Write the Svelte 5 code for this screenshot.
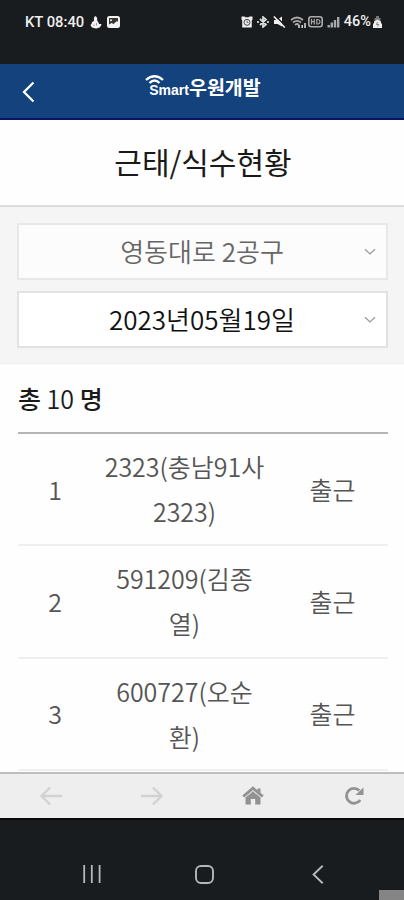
<script lang="ts">
	type Worker = { no: number; name: string; status: string };

	let workers: Worker[] = $state([
		{ no: 1, name: '2323(충남91사2323)', status: '출근' },
		{ no: 2, name: '591209(김종열)', status: '출근' },
		{ no: 3, name: '600727(오순환)', status: '출근' }
	]);

	let total = $state(10);
	let selects = [
		{ label: '영동대로 2공구', disabled: true },
		{ label: '2023년05월19일', disabled: false }
	];
</script>

<div class="screen">
	<div class="status-bar">
		<div class="status-left">
			<span>KT 08:40</span>
			<svg class="flame" width="12" height="13" viewBox="0 0 12 13">
				<path d="M5 0Q8 1 7 4L8 6Q9 7 9 8L11.5 8Q11 12 6 12.5Q1 12 0.5 9Q2 8 2 6L4 5Q3 2 5 0Z" fill="#f2f2f2" />
				<path d="M4 8.500V10M6.500 7V9.500" stroke="#777" stroke-width="0.800" />
			</svg>
			<svg width="13" height="12" viewBox="0 0 13 12">
				<rect x="1" y="1" width="11" height="10" rx="1.500" fill="#353535" stroke="#f2f2f2" stroke-width="2" />
				<path d="M2 10V8.500L4.500 7L6.500 8L10 5L11.500 6.500V10Z" fill="#f2f2f2" />
				<circle cx="4" cy="4.200" r="1" fill="#f2f2f2" />
			</svg>
		</div>
		<div class="status-right">
			<svg width="12" height="12" viewBox="0 0 12 12">
				<path d="M0.500 0.500H3.500L4.500 1.200H7.500L8.500 0.500H11.500V3.500L10.800 4.500V11.500H1.200V4.500L0.500 3.500Z" fill="#eee" />
				<circle cx="6" cy="6.300" r="3" fill="none" stroke="#454a4d" />
				<path d="M6 4.500V6.500H7.500" fill="none" stroke="#454a4d" stroke-width="0.800" />
			</svg>
			<svg width="12" height="12" viewBox="0 0 12 12" fill="none" stroke="#ddd" stroke-width="1.700">
				<path d="M3 3L9 8.500L6 11V1L9 3.500L3 9M1 5V7M11 5V7" />
			</svg>
			<svg width="13" height="12" viewBox="0 0 13 12">
				<path d="M1 4H4L9 0.500V10.500L4.500 8H1Z" fill="#eee" />
				<path d="M2.500 0L12.500 10" stroke="#181c1f" stroke-width="1.500" />
				<path d="M0.800 0.500L11.800 11.500" stroke="#eee" stroke-width="1.600" />
			</svg>
			<svg class="wifi" width="17" height="13" viewBox="0 0 17 13" fill="none" stroke="#aaa" stroke-width="1.700">
				<path d="M1 4Q7 -1 13 4M3 6.500Q7 3.200 11 6.500M5 9Q7 7 9 9" />
				<path d="M9 9V12M12.200 9V12M15 7V12" stroke="#ddd" stroke-width="1.500" />
			</svg>
			<svg width="15" height="12" viewBox="0 0 15 12" fill="none" stroke="#aaa">
				<rect x="0.800" y="0.800" width="13.400" height="10" rx="2.500" stroke-width="1.600" />
				<path d="M3.500 3V8.500M3.500 5.700H6.300M6.300 3V8.500M8.800 3.500V8H10Q12 7.800 12 5.800T10 3.500Z" stroke-width="1.200" />
			</svg>
			<svg width="13" height="12" viewBox="0 0 13 12" fill="#a8a8a8">
				<path d="M0.500 9H2.900V11.500H0.500ZM3.600 6.500H6V11.500H3.600ZM6.800 4H9.200V11.500H6.800ZM10 1H12.400V11.500H10Z" />
			</svg>
			<span class="battery-text">46%</span>
			<svg width="9" height="13" viewBox="0 0 9 13">
				<path d="M3 0H6V2H7.500V5H1.500V2H3Z" fill="#777" />
				<path d="M1 5.500L4.500 3.500L8 5.500V7L9 8V12H0V8L1 7Z" fill="#eee" />
				<path d="M4.500 6L3.500 8.500H5.800L4.500 10.500" fill="none" stroke="#666" stroke-width="0.800" />
			</svg>
		</div>
	</div>

	<header class="app-header">
		<button class="back" aria-label="뒤로">
			<svg width="13" height="22" viewBox="0 0 13 22" fill="none" stroke="#fff" stroke-width="2.300">
				<path d="M11.500 1.500L2 11L11.500 20.500" />
			</svg>
		</button>
		<div class="logo">
			<svg class="logo-wave" width="19" height="11" viewBox="0 0 19 11" fill="none" stroke="#fff" stroke-width="2.300">
				<path d="M1 5Q9.500 -2.500 18 5M4.500 8Q9.500 3 14.500 8" />
			</svg>
			<span class="logo-en">Smart</span>
			<span class="logo-ko">우원개발</span>
		</div>
	</header>

	<h1>근태/식수현황</h1>

	<section class="filters">
		{#each selects as select}
			<button class="select" class:disabled={select.disabled}>
				<span>{select.label}</span>
				<svg width="12" height="8" viewBox="0 0 12 8" fill="none" stroke="#999" stroke-width="1.200">
					<path d="M1 1.200L6 6L11 1.200" />
				</svg>
			</button>
		{/each}
	</section>

	<main>
		<p class="total"><b>총</b> {total} <b>명</b></p>
		<ul>
			{#each workers as worker}
				<li>
					<span class="no">{worker.no}</span>
					<span class="name">{worker.name}</span>
					<span class="status">{worker.status}</span>
				</li>
			{/each}
		</ul>
	</main>

	<nav class="toolbar">
		<svg width="24" height="20" viewBox="0 0 24 20" fill="none" stroke="#d2d2d2" stroke-width="2.400">
			<path d="M23 10H2.500M11 1.500L2.500 10L11 18.500" />
		</svg>
		<svg width="24" height="20" viewBox="0 0 24 20" fill="none" stroke="#d2d2d2" stroke-width="2.400">
			<path d="M1 10H21.500M13 1.500L21.500 10L13 18.500" />
		</svg>
		<svg width="22" height="20" viewBox="0 0 22 20">
			<path d="M3.500 11.500L11 5.500L18.500 11.500V18.500H13.200V13H8.800V18.500H3.500Z" fill="#929292" />
			<path d="M1.200 10.500L11 2.200L20.800 10.500" fill="none" stroke="#929292" stroke-width="2.800" />
			<path d="M3 11.700L11 5L19 11.700" fill="none" stroke="#c0c0c0" stroke-width="0.800" />
			<path d="M15.500 2.500H18.500V7L15.500 4.500Z" fill="#929292" />
		</svg>
		<svg width="22" height="20" viewBox="0 0 22 20">
			<path d="M16.300 4.500A7.500 7.500 0 1 0 17.200 14" fill="none" stroke="#929292" stroke-width="2.800" />
			<path d="M20.500 1.500V9H12.500Z" fill="#929292" />
		</svg>
	</nav>

	<div class="system-nav">
		<svg width="18" height="18" viewBox="0 0 18 18" stroke="#b5b8ba" stroke-width="1.800">
			<path d="M1.200 0V18M8.800 0V18M16.600 0V18" />
		</svg>
		<svg width="19" height="19" viewBox="0 0 19 19" fill="none" stroke="#b5b8ba" stroke-width="1.900">
			<rect x="1" y="1" width="17" height="17" rx="5" />
		</svg>
		<svg width="12" height="19" viewBox="0 0 12 19" fill="none" stroke="#b5b8ba" stroke-width="1.900">
			<path d="M10.700 0.700L1.600 9.500L10.700 18.300" />
		</svg>
		<div class="corner"></div>
	</div>
</div>

<style>
	:global(body) {
		margin: 0;
	}

	.screen {
		width: 404px;
		height: 900px;
		display: flex;
		flex-direction: column;
		overflow: hidden;
		background: #fefefe;
		font-family: 'Noto Sans CJK KR', sans-serif;
		font-weight: 350;
	}

	svg {
		display: block;
		flex-shrink: 0;
	}

	button {
		padding: 0;
		border: 0;
		background: none;
		font: inherit;
	}

	.status-bar {
		height: 64px;
		box-sizing: border-box;
		padding: 14px 22px 0 25px;
		display: flex;
		justify-content: space-between;
		align-items: flex-start;
		background: #181c1f;
		color: #eee;
		font-family: Roboto, sans-serif;
		font-size: 14.800px;
		font-weight: 500;
		line-height: 16px;
		flex-shrink: 0;
	}

	.status-left,
	.status-right {
		display: flex;
		align-items: center;
		white-space: nowrap;
	}

	.status-left {
		gap: 5px;
	}

	.flame {
		margin-left: 1px;
	}

	.status-right {
		gap: 4px;
	}

	.wifi {
		margin-right: -3px;
	}

	.battery-text {
		margin-right: -2px;
		font-size: 14.500px;
	}

	.app-header {
		height: 56px;
		box-sizing: border-box;
		padding: 0 22px;
		display: grid;
		grid-template-columns: 40px 1fr 40px;
		background: #13427c;
		border-bottom: 2px solid #071467;
		color: #fff;
		flex-shrink: 0;
	}

	.back {
		display: flex;
		align-items: center;
		padding-top: 2px;
	}

	.logo {
		display: flex;
		justify-content: center;
		align-items: baseline;
		height: 40px;
		padding: 8px 0 0 6px;
		box-sizing: border-box;
		position: relative;
		font-weight: 700;
	}

	.logo-wave {
		position: absolute;
		left: 83px;
		top: 11px;
	}

	.logo-en {
		font-family: 'Liberation Sans', sans-serif;
		font-size: 14px;
		line-height: 30px;
	}

	.logo-ko {
		font-size: 19.500px;
		line-height: 30px;
	}

	h1 {
		height: 87px;
		box-sizing: border-box;
		margin: 0;
		padding-left: 2px;
		border-bottom: 2px solid #ddd;
		font-size: 30px;
		font-weight: 400;
		line-height: 83px;
		text-align: center;
		color: #1a1a1a;
		flex-shrink: 0;
	}

	.filters {
		display: flex;
		flex-direction: column;
		gap: 11px;
		height: 157px;
		box-sizing: border-box;
		padding: 16px 16px 0 17px;
		background: #f5f5f5;
		border-bottom: 1px solid #eee;
		flex-shrink: 0;
	}

	.select {
		height: 57px;
		box-sizing: border-box;
		display: grid;
		grid-template-columns: 10px 1fr 12px;
		align-items: center;
		padding: 0 10px 0 11px;
		border: 2px solid #e2e2e2;
		background: #fff;
		color: #111;
		font-size: 26px;
		line-height: 48px;
	}

	.select span {
		grid-column: 2;
		text-align: center;
		padding-bottom: 2px;
	}

	.select.disabled {
		background: #fcfcfc;
		border-color: #e8e8e8;
		color: #666;
	}

	main {
		flex: 1;
		min-height: 0;
		overflow: hidden;
		padding: 0 16px 0 18px;
	}

	.total {
		height: 70px;
		box-sizing: border-box;
		margin: 0;
		border-bottom: 2px solid #b5b5b5;
		font-size: 25px;
		line-height: 68px;
		color: #1a1a1a;
	}

	.total b {
		font-weight: 500;
	}

	ul {
		list-style: none;
		margin: 0;
		padding: 0;
	}

	li {
		display: grid;
		grid-template-columns: 20% 50% 30%;
		align-items: center;
		height: 112.300px;
		box-sizing: border-box;
		border-bottom: 2px solid #efefef;
		font-size: 25px;
		line-height: 45px;
		text-align: center;
		color: #555;
	}

	.name {
		padding: 0 10px;
		word-break: break-all;
	}

	.toolbar {
		height: 46px;
		box-sizing: border-box;
		border-top: 2px solid #bdbdbd;
		background: #eee;
		display: grid;
		grid-template-columns: repeat(4, 101px);
		place-items: center;
		flex-shrink: 0;
	}

	.system-nav {
		position: relative;
		height: 82px;
		box-sizing: border-box;
		padding: 28px 30px 0 35px;
		display: grid;
		grid-template-columns: repeat(3, 1fr);
		justify-items: center;
		align-items: center;
		align-content: center;
		background: #181c1f;
		border-top: 2px solid #08090a;
		flex-shrink: 0;
	}

	.corner {
		position: absolute;
		right: 0;
		bottom: 0;
		width: 25px;
		height: 10px;
		background: #858585;
	}
</style>
